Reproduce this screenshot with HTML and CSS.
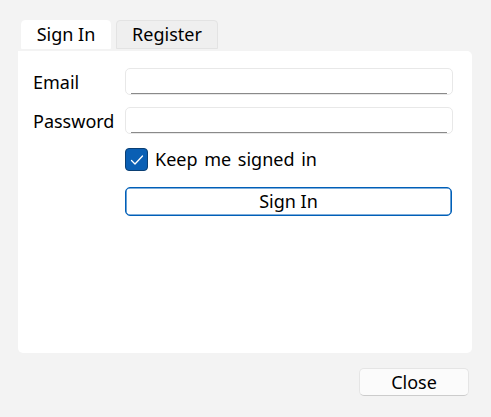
FILE: index.html
```html
<!DOCTYPE html>
<html>
<head>
<meta charset="utf-8">
<link rel="stylesheet" href="styles.css">
</head>
<body>
<div class="window">
  <div class="tabs">
    <div class="tab tab-active">Sign In</div>
    <div class="tab">Register</div>
  </div>
  <div class="panel">
    <div class="form">
      <label class="label">Email</label>
      <div class="field"></div>
      <label class="label">Password</label>
      <div class="field"></div>
      <div class="check-row">
        <span class="checkbox">
          <svg width="14" height="12" viewBox="0 0 14 12"><path d="M1.5 6.5 L5 10 L12.5 2" fill="none" stroke="#fff" stroke-width="1.3" stroke-linecap="round" stroke-linejoin="round"/></svg>
        </span>
        <span class="check-label">Keep me signed in</span>
      </div>
      <div class="btn-primary">Sign In</div>
    </div>
  </div>
  <div class="footer">
    <div class="btn">Close</div>
  </div>
</div>
</body>
</html>
```
FILE: styles.css
```css
html, body {
  margin: 0;
  padding: 0;
  background: #f3f3f3;
}
body {
  font-family: "Noto Sans", "Open Sans", sans-serif;
  font-size: 18px;
  color: #000000;
  width: 491px;
  height: 417px;
  overflow: hidden;
}
.window {
  display: flex;
  flex-direction: column;
}
.tabs {
  display: flex;
  gap: 5px;
  padding: 20px 0 0 21px;
}
.tab {
  box-sizing: border-box;
  height: 29px;
  line-height: 27px;
  text-align: center;
  border: 1px solid #e3e3e3;
  border-radius: 4px 4px 0 0;
  background: #efefef;
  width: 102px;
}
.tab-active {
  background: #ffffff;
  border-color: #ffffff;
  width: 90px;
}
.panel {
  box-sizing: border-box;
  margin: 2px 19px 0 18px;
  height: 302px;
  background: #ffffff;
  border-radius: 0 5px 5px 5px;
  padding: 17px 19px 0 15px;
}
.form {
  display: grid;
  grid-template-columns: 92px 1fr;
  row-gap: 12px;
  align-items: center;
}
.label {
  line-height: 24px;
}
.field {
  box-sizing: border-box;
  height: 27px;
  border: 1px solid #e8e8e8;
  border-radius: 5px;
  background: linear-gradient(#8a8a8a, #8a8a8a) center bottom / calc(100% - 10px) 1.5px no-repeat, #ffffff;
}
.check-row {
  grid-column: 2;
  display: flex;
  align-items: center;
  gap: 7px;
  margin-top: 2px;
}
.checkbox {
  box-sizing: border-box;
  width: 23px;
  height: 23px;
  border-radius: 4px;
  background: #0a5fb4;
  border: 1px solid #0b3f73;
  display: flex;
  align-items: center;
  justify-content: center;
}
.check-label {
  line-height: 23px;
  word-spacing: 2px;
}
.btn-primary {
  grid-column: 2;
  box-sizing: border-box;
  height: 29px;
  margin-top: 4px;
  margin-right: 1px;
  border: 1px solid #005fb8;
  box-shadow: inset 0 0 0 0.6px #005fb8;
  border-radius: 5px;
  text-align: center;
  line-height: 26px;
  background: #ffffff;
}
.footer {
  display: flex;
  justify-content: flex-end;
  padding: 15px 22px 0 0;
}
.btn {
  box-sizing: border-box;
  width: 110px;
  height: 28px;
  border: 1px solid #e5e5e5;
  border-bottom-color: #cccccc;
  border-radius: 5px;
  background: #fbfbfb;
  text-align: center;
  line-height: 26px;
}
```
